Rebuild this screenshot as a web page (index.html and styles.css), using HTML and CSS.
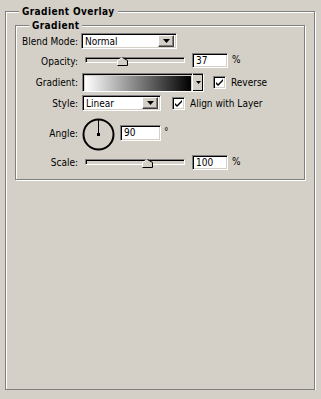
FILE: index.html
```html
<!DOCTYPE html>
<html>
<head>
<meta charset="utf-8">
<link rel="stylesheet" href="styles.css">
</head>
<body>
<div class="group outer">
  <div class="legend">Gradient Overlay</div>
  <div class="group inner">
    <div class="legend">Gradient</div>
    <div class="form">
      <div class="lbl">Blend Mode:</div>
      <div class="ctl">
        <div class="select blend"><span class="val">Normal</span><span class="btn"><svg width="7" height="4" viewBox="0 0 7 4"><path d="M0 0H7L3.5 4Z" fill="#000"/></svg></span></div>
      </div>

      <div class="lbl">Opacity:</div>
      <div class="ctl top">
        <div class="slider"><div class="track"></div><svg class="thumb" style="left:32px" width="11" height="9" viewBox="0 0 11 9"><path d="M0.5 8.5V3.5L5.5 0.5L10.5 3.5V8.5Z" fill="#d4d0c8"/><path d="M0.5 8.5V3.5L5.5 0.5" fill="none" stroke="#fff"/><path d="M5.5 0.5L10.5 3.5V8.5H0.5" fill="none" stroke="#000"/></svg></div>
        <div class="field num">37</div>
        <span class="unit">%</span>
      </div>

      <div class="lbl">Gradient:</div>
      <div class="ctl">
        <div class="gradbox"><div class="grad"></div></div>
        <div class="gradbtn"><svg width="5" height="3" viewBox="0 0 5 3"><path d="M0 0H5L2.5 3Z" fill="#000"/></svg></div>
        <div class="check"><svg width="9" height="9" viewBox="0 0 9 9"><path d="M1 4L3 6L8 1V3L3 8L1 6Z" fill="#000"/></svg></div>
        <span class="cbtext">Reverse</span>
      </div>

      <div class="lbl">Style:</div>
      <div class="ctl">
        <div class="select style"><span class="val">Linear</span><span class="btn"><svg width="7" height="4" viewBox="0 0 7 4"><path d="M0 0H7L3.5 4Z" fill="#000"/></svg></span></div>
        <div class="check gap2"><svg width="9" height="9" viewBox="0 0 9 9"><path d="M1 4L3 6L8 1V3L3 8L1 6Z" fill="#000"/></svg></div>
        <span class="cbtext">Align with Layer</span>
      </div>

      <div class="lbl angle-lbl">Angle:</div>
      <div class="ctl angle">
        <svg class="dial" width="33" height="33" viewBox="0 0 33 33"><circle cx="16.5" cy="16.5" r="15" fill="none" stroke="#000" stroke-width="2"/><path d="M16.5 16.5V2" stroke="#000" stroke-width="1"/><rect x="15" y="15" width="3" height="3" fill="#000"/></svg>
        <div class="field deg">90</div>
        <span class="degsym">°</span>
      </div>

      <div class="lbl">Scale:</div>
      <div class="ctl top">
        <div class="slider"><div class="track"></div><svg class="thumb" style="left:57px" width="11" height="9" viewBox="0 0 11 9"><path d="M0.5 8.5V3.5L5.5 0.5L10.5 3.5V8.5Z" fill="#d4d0c8"/><path d="M0.5 8.5V3.5L5.5 0.5" fill="none" stroke="#fff"/><path d="M5.5 0.5L10.5 3.5V8.5H0.5" fill="none" stroke="#000"/></svg></div>
        <div class="field num">100</div>
        <span class="unit">%</span>
      </div>
    </div>
  </div>
</div>
</body>
</html>
```

FILE: styles.css
```css
html { background: #d4d0c8; }
body {
  margin: 0;
  padding-top: 11px;
  font-family: "DejaVu Sans Condensed", "DejaVu Sans", sans-serif;
  font-stretch: condensed;
  font-size: 10px;
  color: #000;
}
.group {
  box-sizing: border-box;
  border: 1px solid #808080;
  box-shadow: inset 1px 1px 0 #fff, 1px 1px 0 #fff;
}
.outer {
  margin-left: 5px;
  width: 310px;
  height: 379px;
}
.inner {
  margin: 7px 0 0 9px;
  width: 290px;
  height: 155px;
}
.legend {
  width: fit-content;
  margin: -7px 0 0 13px;
  padding: 0 3px;
  background: #d4d0c8;
  font-weight: bold;
  font-size: 10px;
  line-height: 13px;
  letter-spacing: 0.4px;
}
.form {
  display: grid;
  grid-template-columns: 62px auto;
  grid-template-rows: 16px 18px 19px 16px 37px 16px;
  column-gap: 4px;
  row-gap: 3px;
  padding-top: 1px;
}
.lbl {
  text-align: right;
  align-self: center;
  line-height: 13px;
  white-space: nowrap;
}
.ctl {
  display: flex;
  align-items: center;
  line-height: 13px;
}
.ctl.top { align-items: flex-start; }
.field, .select, .gradbox, .gradbtn, .check {
  box-sizing: border-box;
  border: 1px solid;
  border-color: #808080 #fff #fff #808080;
  box-shadow: inset 1px 1px 0 #000, inset -1px -1px 0 #d4d0c8;
}
.select {
  display: flex;
  align-items: center;
  justify-content: space-between;
  height: 16px;
  background: #fff;
  padding: 1px;
}
.select.blend { width: 96px; margin-left: -1px; }
.select.style { width: 79px; }
.select .val { padding-left: 2px; }
.btn {
  box-sizing: border-box;
  width: 16px;
  height: 12px;
  margin-right: 1px;
  border: 1px solid;
  border-color: #fff #404040 #404040 #fff;
  box-shadow: inset -1px -1px 0 #808080;
  background: #d4d0c8;
  display: flex;
  align-items: center;
  justify-content: center;
}
.slider {
  position: relative;
  width: 100px;
  height: 10px;
  margin: 5px 0 0 3px;
}
.track {
  box-sizing: border-box;
  height: 6px;
  border: 1px solid;
  border-color: #808080 #fff #fff #808080;
  box-shadow: inset 1px 1px 0 #000;
  background: #d4d0c8;
}
.thumb {
  position: absolute;
  top: 0;
  display: block;
}
.field {
  height: 15px;
  background: #fff;
  padding: 1px 0 0 3px;
  line-height: 12px;
  margin-top: 1px;
}
.num { width: 36px; margin-left: 7px; }
.unit { margin-left: 4px; margin-top: 1px; }
.gradbox {
  width: 111px;
  height: 19px;
  padding: 2px 0 0 2px;
}
.grad {
  height: 15px;
  margin-right: 1px;
  background: linear-gradient(to right, #fff 0%, #000 100%);
}
.gradbtn {
  width: 11px;
  height: 19px;
  background: #d4d0c8;
  display: flex;
  align-items: center;
  justify-content: center;
  border-left: none;
  box-shadow: inset 0 1px 0 #000, inset -1px -1px 0 #000;
}
.check {
  width: 13px;
  height: 13px;
  background: #fff;
  margin-left: 9px;
  display: flex;
  align-items: center;
  justify-content: center;
}
.check.gap2 { margin-left: 11px; }
.cbtext { margin-left: 5px; }
.angle { align-items: flex-end; }
.angle-lbl { align-self: end; margin-bottom: 11px; }
.dial { display: block; }
.deg {
  width: 41px;
  height: 16px;
  margin: 0 0 10px 5px;
}
.degsym {
  margin: 0 0 13px 3px;
  font-size: 10px;
}
```
